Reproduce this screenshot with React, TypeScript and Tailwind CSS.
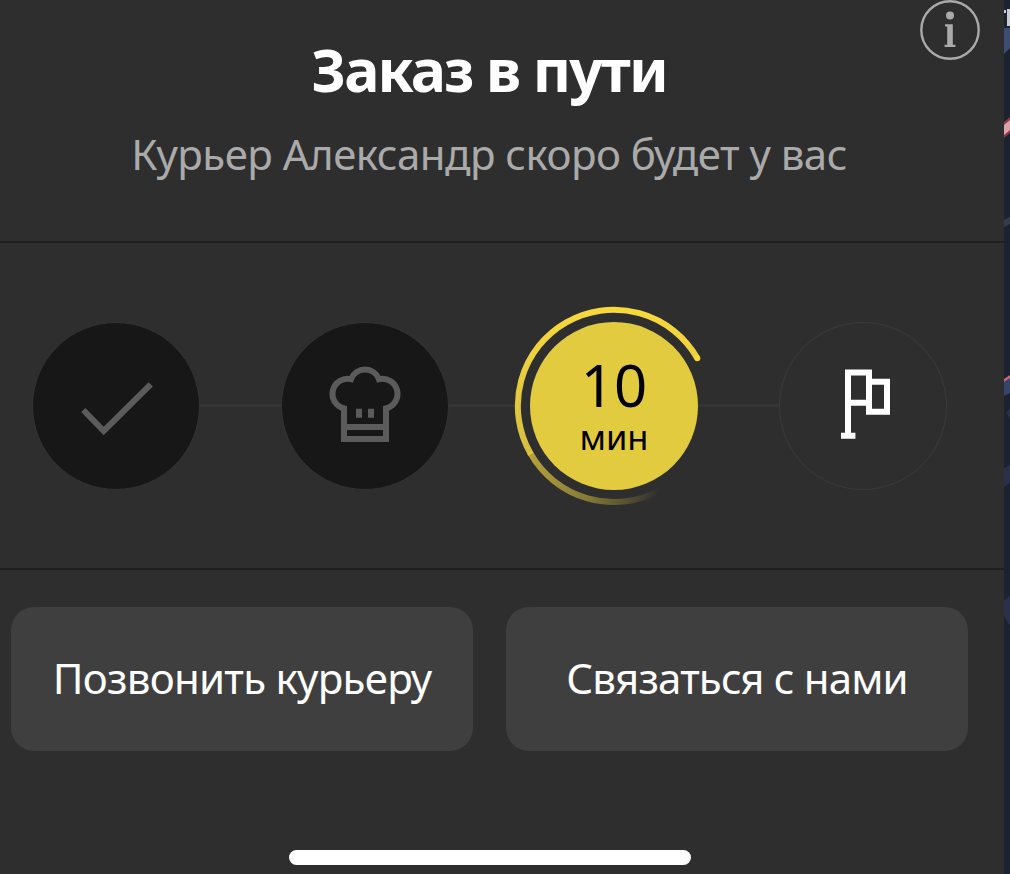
import type { ReactNode } from "react";

function InfoIcon() {
  return (
    <svg width="60" height="60" viewBox="0 0 60 60" fill="none">
      <circle cx="30" cy="30" r="28.7" stroke="#aaaaaa" strokeWidth="2.4" />
      <circle cx="30" cy="15.4" r="4" fill="#aaaaaa" />
      <path d="M25 24.2h7.8v20.6h2.6v2.2H24.6v-2.2h2.6V26.4H25z" fill="#aaaaaa" />
    </svg>
  );
}

function CheckIcon() {
  return (
    <svg className="shrink-0" width="168" height="168" viewBox="0 0 168 168" fill="none">
      <path d="M51.3 88 71.7 109l47-46.7" stroke="#5b5b5b" strokeWidth="6" />
    </svg>
  );
}

function ChefHatIcon() {
  return (
    <svg className="shrink-0" width="168" height="168" viewBox="0 0 168 168" fill="none">
      <path
        d="M63 117V86.4A15 15 0 1 1 70 57.2A15 15 0 0 1 98 57.2A15 15 0 1 1 105 86.4V117Z"
        stroke="#5b5b5b"
        strokeWidth="6"
      />
      <path d="M63 105h42" stroke="#5b5b5b" strokeWidth="6" />
      <path d="M75 86.7h6v9h-6zM87 86.7h6v9h-6z" fill="#5b5b5b" />
    </svg>
  );
}

function FlagIcon() {
  return (
    <svg className="shrink-0" width="168" height="168" viewBox="0 0 168 168" fill="none">
      <path
        d="M69 113V50.4h21v42.3M69 80.8h21M90 59.8h18v29.9H90M62 113.7h14.4"
        stroke="#ffffff"
        strokeWidth="6"
      />
    </svg>
  );
}

// Arc round the current step, fading out towards its tail
function ProgressRing() {
  return (
    <svg
      className="absolute -left-4 -top-4"
      width="200"
      height="200"
      viewBox="-100 -100 200 200"
      fill="none"
    >
      <defs>
        <linearGradient id="head" gradientUnits="userSpaceOnUse" x1="0" y1="-96" x2="0" y2="48">
          <stop stopColor="#f8d93c" />
          <stop offset="1" stopColor="#d6be42" />
        </linearGradient>
        <linearGradient id="tail" gradientUnits="userSpaceOnUse" x1="-84" y1="48" x2="46" y2="86">
          <stop stopColor="#b5a23c" />
          <stop offset="0.5" stopColor="#857a37" />
          <stop offset="0.75" stopColor="#5c5633" />
          <stop offset="1" stopColor="#2e2e2e" />
        </linearGradient>
      </defs>
      <path d="M46 84.3A96 96 0 0 1 -83.6 47.3" stroke="url(#tail)" strokeWidth="6" />
      <path
        d="M-83.6 47.3A96 96 0 0 1 83.3 -47.7"
        stroke="url(#head)"
        strokeWidth="6"
      />
      <path d="M-86.2 48.8l5.2-3" stroke="#e0c63f" strokeWidth="2" />
      <circle cx="83.3" cy="-47.7" r="3" fill="#f8d93c" />
    </svg>
  );
}

function Step({ className, children }: { className: string; children: ReactNode }) {
  return (
    <div
      className={`relative flex size-[168px] shrink-0 flex-col items-center justify-center rounded-full ${className}`}
    >
      {children}
    </div>
  );
}

function ActionButton({ className, children }: { className: string; children: ReactNode }) {
  return (
    <button
      className={`h-36 w-[462px] rounded-[23px] bg-[#3f3f3f] pb-[3px] text-[42px] text-white ${className}`}
    >
      {children}
    </button>
  );
}

// Sliver of the map that stays visible beside the sheet
function MapEdge() {
  return (
    <svg className="shrink-0" width="6" height="874" viewBox="0 0 6 874">
      <rect width="6" height="874" fill="#1b2230" />
      <path d="M0 28h6v20l-6 6z" fill="#3c4c73" />
      <path d="M0 10h2v3H0zM3 9h3v17H3z" fill="#c8ccd6" />
      <path d="M0 122l6-5v16l-6 5z" fill="#8a3c48" />
      <path d="M0 125l6-5v10l-6 5z" fill="#dba3a8" />
      <path d="M0 220l6-3v7l-6 3z" fill="#343c49" />
      <path d="M0 382l6-4v15l-6 3z" fill="#38456a" />
      <path d="M0 379l6-4v3l-6 4z" fill="#c86a7c" />
      <path d="M2 412l4-3v10z" fill="#29304a" />
      <path d="M0 468l6-3v18l-6 4z" fill="#29304a" />
      <path d="M0 600l6-4v30l-6-10z" fill="#29304a" />
    </svg>
  );
}

export default function App() {
  return (
    <div className="flex h-[874px] w-[1010px] overflow-hidden bg-[#2e2e2e] font-['Noto_Sans',sans-serif]">
      <main className="relative flex w-[1004px] shrink-0 flex-col">
        <header className="flex h-[241px] w-[978px] shrink-0 flex-col items-center whitespace-nowrap pt-[29px]">
          <h1 className="text-[59px] font-bold leading-[80px] tracking-[-1.9px] text-white">
            Заказ в пути
          </h1>
          <p className="mt-3.5 text-[42px] leading-[62px] tracking-[-0.52px] text-[#aaaaaa]">
            Курьер Александр скоро будет у вас
          </p>
        </header>
        <button className="absolute left-[920px] top-0">
          <InfoIcon />
        </button>

        <section className="flex h-[329px] shrink-0 items-center border-y-2 border-[#1f1f1f] pl-8">
          <Step className="border border-[#333333] bg-[#171717]">
            <CheckIcon />
          </Step>
          <div className="h-[3px] w-[81px] bg-[#353535]" />
          <Step className="border border-[#333333] bg-[#171717]">
            <ChefHatIcon />
          </Step>
          <div className="mr-[14px] h-[3px] w-[67px] bg-[#353535]" />
          <Step className="bg-[#e3cb40] pt-0.5 text-black">
            <ProgressRing />
            <span className="text-[58px] leading-[56px]">10</span>
            <span className="mt-1 text-[34.5px] leading-10">мин</span>
          </Step>
          <div className="h-[3px] w-[81px] bg-[#353535]" />
          <Step className="border border-[#3a3a3a]">
            <FlagIcon />
          </Step>
        </section>

        <div className="flex gap-[33px] pl-[11px] pt-[37px]">
          <ActionButton className="tracking-[-0.72px]">Позвонить курьеру</ActionButton>
          <ActionButton className="tracking-[-0.85px]">Связаться с нами</ActionButton>
        </div>

        <div className="mb-[9px] ml-[289px] mt-auto h-[15px] w-[402px] rounded-full bg-white" />
      </main>
      <MapEdge />
    </div>
  );
}
